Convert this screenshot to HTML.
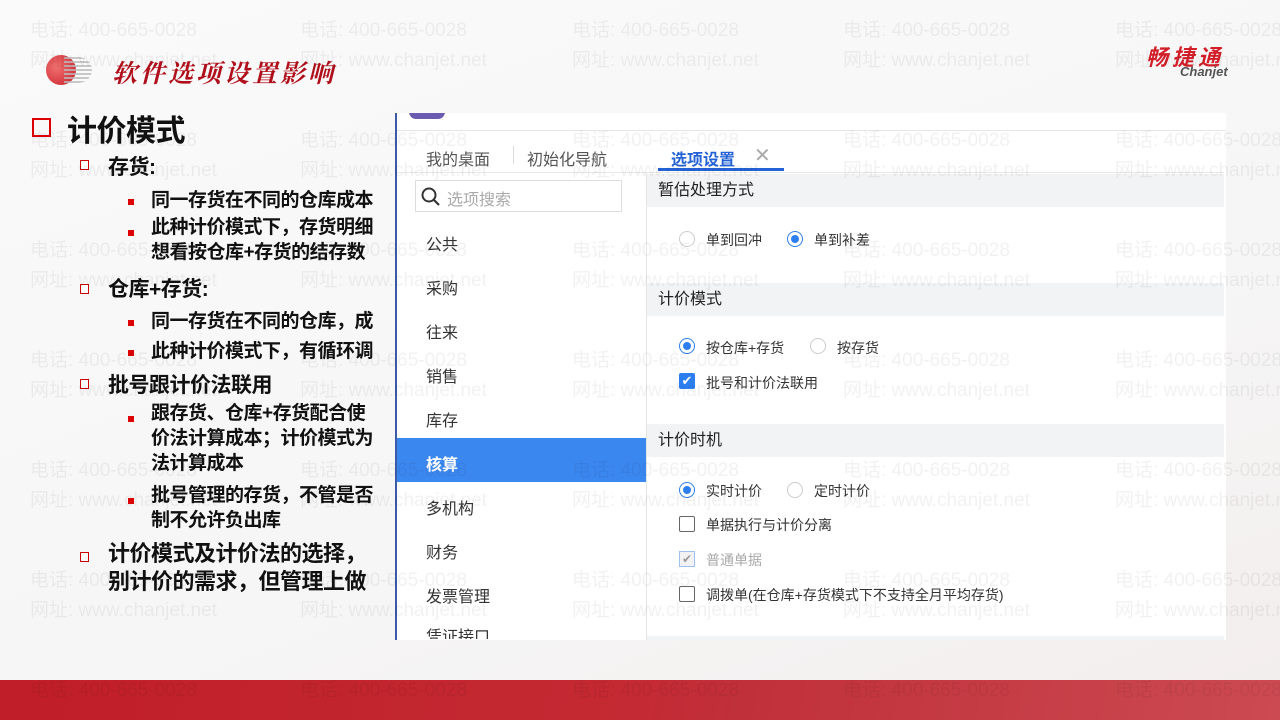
<!DOCTYPE html>
<html style="overflow:hidden;width:1280px;height:720px"><head><meta charset="utf-8"><style>
body{margin:0;width:1280px;height:720px;overflow:hidden;position:relative;background:linear-gradient(160deg,#fafafa 0%,#f6f6f6 60%,#f3eded 100%);font-family:"Liberation Sans","Noto Sans CJK SC",sans-serif}
.a{position:absolute;white-space:nowrap}
.wm{position:absolute;color:rgba(0,0,0,0.055);font-size:19px;font-family:"Liberation Sans","Noto Sans CJK SC",sans-serif;z-index:20;line-height:30px;white-space:nowrap}
.L{font-weight:bold;color:#111;font-family:"Liberation Sans","Noto Sans CJK SC",sans-serif;letter-spacing:-0.5px}
.sq{position:absolute;width:7px;height:8px;border:1.5px solid #c00;background:#fff}
.dot{position:absolute;width:6px;height:6px;background:#d00}
.side{position:absolute;left:426px;font-size:16px;color:#333}
.hd{position:absolute;left:647px;width:577px;height:33px;background:#f2f3f5;font-size:16px;color:#222;line-height:33px;text-indent:11px}
.op{position:absolute;font-size:14px;color:#333}
.rad{position:absolute;width:14px;height:14px;border:1px solid #ccc;border-radius:50%;background:#fff}
.rad.on{border-color:#2d7ff0}
.rad.on::after{content:"";position:absolute;left:3px;top:3px;width:8px;height:8px;border-radius:50%;background:#2d7ff0}
.cb{position:absolute;width:14px;height:14px;border:1px solid #666;border-radius:2px;background:#fff}
</style></head><body>
<div class="a" style="left:46px;top:55px;width:30px;height:30px;border-radius:50%;background:radial-gradient(circle at 35% 40%,#f07070,#c81e28)"></div>
<div class="a" style="left:64px;top:57px;width:28px;height:26px;background:repeating-linear-gradient(#bbb 0 2px,transparent 2px 4px);border-radius:0 50% 50% 0;opacity:.8"></div>
<div class="a" style="left:112px;top:54px;font-size:25px;color:#b0101c;font-weight:bold;font-style:italic;letter-spacing:3px;font-family:'Liberation Serif','Noto Serif CJK SC',serif">软件选项设置影响</div>
<div class="a" style="left:1146px;top:40px;font-size:22px;color:#d21f2a;font-weight:bold;font-style:italic;letter-spacing:4px">畅捷通</div>
<div class="a" style="left:1180px;top:64px;font-size:13px;color:#555;font-style:italic;font-weight:bold">Chanjet</div>
<div class="a" style="left:32px;top:118px;width:15px;height:15px;border:2px solid #d00"></div>
<div class="a L" style="left:67px;top:106px;font-size:30px">计价模式</div>
<div class="sq" style="left:80px;top:160px"></div><div class="a L" style="left:108px;top:151px;font-size:21px">存货:</div>
<div class="dot" style="left:128px;top:199px"></div><div class="a L" style="left:151px;top:185px;font-size:19px">同一存货在不同的仓库成本</div>
<div class="dot" style="left:128px;top:230px"></div><div class="a L" style="left:151px;top:215px;font-size:19px;line-height:25px">此种计价模式下，存货明细<br>想看按仓库+存货的结存数</div>
<div class="sq" style="left:80px;top:284px"></div><div class="a L" style="left:108px;top:273px;font-size:21px">仓库+存货:</div>
<div class="dot" style="left:128px;top:320px"></div><div class="a L" style="left:151px;top:306px;font-size:19px">同一存货在不同的仓库，成</div>
<div class="dot" style="left:128px;top:350px"></div><div class="a L" style="left:151px;top:336px;font-size:19px">此种计价模式下，有循环调</div>
<div class="sq" style="left:80px;top:379px"></div><div class="a L" style="left:108px;top:369px;font-size:21px">批号跟计价法联用</div>
<div class="dot" style="left:128px;top:416px"></div><div class="a L" style="left:151px;top:401px;font-size:19px;line-height:25px">跟存货、仓库+存货配合使<br>价法计算成本；计价模式为<br>法计算成本</div>
<div class="dot" style="left:128px;top:498px"></div><div class="a L" style="left:151px;top:483px;font-size:19px;line-height:25px">批号管理的存货，不管是否<br>制不允许负出库</div>
<div class="sq" style="left:80px;top:552px"></div><div class="a L" style="left:108px;top:540px;font-size:22px;line-height:28px">计价模式及计价法的选择，<br>别计价的需求，但管理上做</div>
<div class="a" style="left:395px;top:113px;width:829px;height:527px;background:#fff;border-left:2px solid #3d5aa8;overflow:hidden">
 <div class="a" style="left:0;top:0;width:829px;height:17px;background:#fff;border-bottom:1px solid #e5e5e5"></div>
 <div class="a" style="left:12px;top:-8px;width:36px;height:14px;border-radius:8px;background:#6b5bb0"></div>
</div>
<div class="a" style="left:426px;top:146px;font-size:16px;color:#555">我的桌面</div>
<div class="a" style="left:513px;top:146px;width:1px;height:18px;background:#ddd"></div>
<div class="a" style="left:527px;top:146px;font-size:16px;color:#555">初始化导航</div>
<div class="a" style="left:671px;top:146px;font-size:16px;color:#2463d6;font-weight:bold">选项设置</div>
<div class="a" style="left:754px;top:143px;font-size:20px;color:#aaa">✕</div>
<div class="a" style="left:658px;top:168px;width:126px;height:3px;background:#2463d6"></div>
<div class="a" style="left:397px;top:172px;width:827px;height:1px;background:#e8e8e8"></div>
<div class="a" style="left:646px;top:173px;width:1px;height:467px;background:#e5e5e5"></div>
<div class="a" style="left:415px;top:180px;width:205px;height:30px;border:1px solid #ddd;background:#fff"></div>
<svg class="a" style="left:420px;top:186px" width="22" height="22" viewBox="0 0 22 22"><circle cx="9" cy="9" r="6.5" fill="none" stroke="#333" stroke-width="2"/><path d="M14 14l5 5" stroke="#333" stroke-width="2.2"/></svg>
<div class="a" style="left:447px;top:186px;font-size:16px;color:#aaa">选项搜索</div>
<div class="side" style="top:231px">公共</div>
<div class="side" style="top:275px">采购</div>
<div class="side" style="top:319px">往来</div>
<div class="side" style="top:363px">销售</div>
<div class="side" style="top:407px">库存</div>
<div class="a" style="left:397px;top:438px;width:249px;height:44px;background:#3b87f0"></div>
<div class="side" style="top:451px;color:#fff;font-weight:bold">核算</div>
<div class="side" style="top:495px">多机构</div>
<div class="side" style="top:539px">财务</div>
<div class="side" style="top:583px">发票管理</div>
<div class="side" style="top:623px;height:16px;overflow:hidden">凭证接口</div>
<div class="hd" style="top:174px">暂估处理方式</div>
<div class="rad" style="left:679px;top:231px"></div><div class="op" style="left:706px;top:230px">单到回冲</div>
<div class="rad on" style="left:787px;top:231px"></div><div class="op" style="left:814px;top:230px">单到补差</div>
<div class="hd" style="top:283px">计价模式</div>
<div class="rad on" style="left:679px;top:338px"></div><div class="op" style="left:706px;top:338px">按仓库+存货</div>
<div class="rad" style="left:810px;top:338px"></div><div class="op" style="left:837px;top:338px">按存货</div>
<div class="a" style="left:679px;top:373px;width:16px;height:16px;background:#2d7ff0;border-radius:2px;color:#fff;font-size:13px;line-height:16px;text-align:center">✔</div>
<div class="op" style="left:706px;top:373px">批号和计价法联用</div>
<div class="hd" style="top:424px">计价时机</div>
<div class="rad on" style="left:679px;top:482px"></div><div class="op" style="left:706px;top:481px">实时计价</div>
<div class="rad" style="left:787px;top:482px"></div><div class="op" style="left:814px;top:481px">定时计价</div>
<div class="cb" style="left:679px;top:516px"></div><div class="op" style="left:706px;top:515px">单据执行与计价分离</div>
<div class="a" style="left:679px;top:551px;width:14px;height:14px;border:1px solid #a0c0f0;background:#f2f2f2;color:#999;font-size:12px;line-height:14px;text-align:center">✔</div>
<div class="op" style="left:706px;top:550px;color:#aaa">普通单据</div>
<div class="cb" style="left:679px;top:586px"></div><div class="op" style="left:706px;top:585px">调拨单(在仓库+存货模式下不支持全月平均存货)</div>
<div class="a" style="left:647px;top:636px;width:577px;height:4px;background:#f2f3f5"></div>
<div class="a" style="left:0;top:680px;width:1280px;height:40px;background:linear-gradient(100deg,#c01e28 0%,#c42a33 50%,#c0303a 58%,#cc4a52 100%)"></div>
<div class="wm" style="left:30px;top:16px">电话: 400-665-0028<br>网址: www.chanjet.net</div>
<div class="wm" style="left:300px;top:16px">电话: 400-665-0028<br>网址: www.chanjet.net</div>
<div class="wm" style="left:572px;top:16px">电话: 400-665-0028<br>网址: www.chanjet.net</div>
<div class="wm" style="left:843px;top:16px">电话: 400-665-0028<br>网址: www.chanjet.net</div>
<div class="wm" style="left:1115px;top:16px">电话: 400-665-0028<br>网址: www.chanjet.net</div>
<div class="wm" style="left:30px;top:126px">电话: 400-665-0028<br>网址: www.chanjet.net</div>
<div class="wm" style="left:300px;top:126px">电话: 400-665-0028<br>网址: www.chanjet.net</div>
<div class="wm" style="left:572px;top:126px">电话: 400-665-0028<br>网址: www.chanjet.net</div>
<div class="wm" style="left:843px;top:126px">电话: 400-665-0028<br>网址: www.chanjet.net</div>
<div class="wm" style="left:1115px;top:126px">电话: 400-665-0028<br>网址: www.chanjet.net</div>
<div class="wm" style="left:30px;top:236px">电话: 400-665-0028<br>网址: www.chanjet.net</div>
<div class="wm" style="left:300px;top:236px">电话: 400-665-0028<br>网址: www.chanjet.net</div>
<div class="wm" style="left:572px;top:236px">电话: 400-665-0028<br>网址: www.chanjet.net</div>
<div class="wm" style="left:843px;top:236px">电话: 400-665-0028<br>网址: www.chanjet.net</div>
<div class="wm" style="left:1115px;top:236px">电话: 400-665-0028<br>网址: www.chanjet.net</div>
<div class="wm" style="left:30px;top:346px">电话: 400-665-0028<br>网址: www.chanjet.net</div>
<div class="wm" style="left:300px;top:346px">电话: 400-665-0028<br>网址: www.chanjet.net</div>
<div class="wm" style="left:572px;top:346px">电话: 400-665-0028<br>网址: www.chanjet.net</div>
<div class="wm" style="left:843px;top:346px">电话: 400-665-0028<br>网址: www.chanjet.net</div>
<div class="wm" style="left:1115px;top:346px">电话: 400-665-0028<br>网址: www.chanjet.net</div>
<div class="wm" style="left:30px;top:456px">电话: 400-665-0028<br>网址: www.chanjet.net</div>
<div class="wm" style="left:300px;top:456px">电话: 400-665-0028<br>网址: www.chanjet.net</div>
<div class="wm" style="left:572px;top:456px">电话: 400-665-0028<br>网址: www.chanjet.net</div>
<div class="wm" style="left:843px;top:456px">电话: 400-665-0028<br>网址: www.chanjet.net</div>
<div class="wm" style="left:1115px;top:456px">电话: 400-665-0028<br>网址: www.chanjet.net</div>
<div class="wm" style="left:30px;top:566px">电话: 400-665-0028<br>网址: www.chanjet.net</div>
<div class="wm" style="left:300px;top:566px">电话: 400-665-0028<br>网址: www.chanjet.net</div>
<div class="wm" style="left:572px;top:566px">电话: 400-665-0028<br>网址: www.chanjet.net</div>
<div class="wm" style="left:843px;top:566px">电话: 400-665-0028<br>网址: www.chanjet.net</div>
<div class="wm" style="left:1115px;top:566px">电话: 400-665-0028<br>网址: www.chanjet.net</div>
<div class="wm" style="left:30px;top:676px">电话: 400-665-0028</div>
<div class="wm" style="left:300px;top:676px">电话: 400-665-0028</div>
<div class="wm" style="left:572px;top:676px">电话: 400-665-0028</div>
<div class="wm" style="left:843px;top:676px">电话: 400-665-0028</div>
<div class="wm" style="left:1115px;top:676px">电话: 400-665-0028</div>
</body></html>
